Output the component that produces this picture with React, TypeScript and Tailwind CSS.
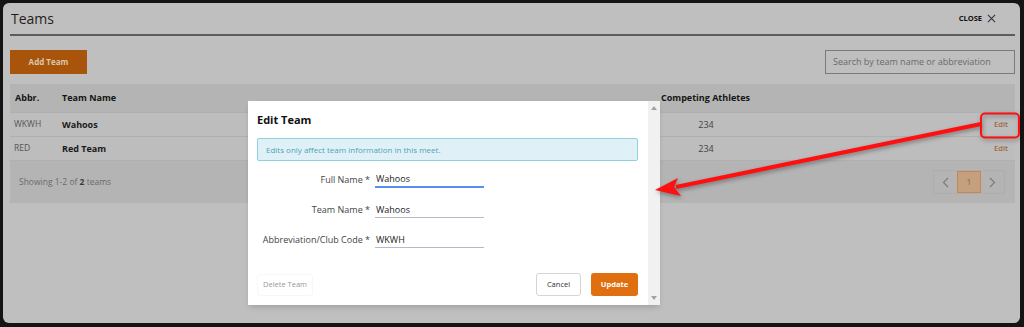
import React from "react";

const teams = [
  { abbr: "WKWH", name: "Wahoos", athletes: 234 },
  { abbr: "RED", name: "Red Team", athletes: 234 },
];

function Field({ label, value, active }: { label: string; value: string; active?: boolean }) {
  return (
    <div className="grid grid-cols-[113px_109px] items-center gap-x-[5px] h-[30px]">
      <span className="text-right text-[9px] text-[#444]">{label}</span>
      <div
        className={`h-[16px] flex items-center pl-[1px] text-[9px] text-[#222] border-b ${
          active ? "border-[#5b8def] border-b-2" : "border-[#b8b8c8]"
        }`}
      >
        {value}
      </div>
    </div>
  );
}

function EditTeamModal() {
  return (
    <div className="absolute left-[248px] top-[101px] w-[412px] h-[204px] bg-white flex shadow-md">
      <div className="flex-1 flex flex-col pl-[9px] pr-[10px] pt-[10px] pb-[9px]">
        <h2 className="text-[11px] font-bold text-[#111] leading-[18px]">Edit Team</h2>
        <div className="mt-[9px] h-[23px] flex items-center px-[8px] rounded-[2px] border border-[#8fd0df] bg-[#dff1f6] text-[8px] text-[#4ea3ba]">
          Edits only affect team information in this meet.
        </div>
        <div className="mt-[4px] flex flex-col">
          <Field label="Full Name *" value="Wahoos" active />
          <Field label="Team Name *" value="Wahoos" />
          <Field label="Abbreviation/Club Code *" value="WKWH" />
        </div>
        <div className="mt-auto flex items-center justify-between">
          <button className="h-[22px] px-[5px] rounded-[3px] border border-[#f7f7f7] text-[7.5px] text-[#9a9a9a]">
            Delete Team
          </button>
          <div className="flex gap-[10px]">
            <button className="h-[23px] w-[45px] rounded-[3px] border border-[#d4d4d4] bg-white text-[7.5px] text-[#333]">
              Cancel
            </button>
            <button className="h-[23px] w-[47px] rounded-[3px] bg-[#e0700f] text-[7.5px] font-bold text-white">
              Update
            </button>
          </div>
        </div>
      </div>
      <div className="w-[12px] bg-[#f1f1f1] flex flex-col items-center justify-between py-[5px]">
        <span className="w-0 h-0 border-x-[3.5px] border-x-transparent border-b-[4px] border-b-[#a3a3a3]" />
        <span className="w-0 h-0 border-x-[3.5px] border-x-transparent border-t-[4px] border-t-[#a3a3a3]" />
      </div>
    </div>
  );
}

function Annotation() {
  return (
    <svg
      className="absolute left-0 top-0 pointer-events-none"
      width="1024"
      height="327"
      viewBox="0 0 1024 327"
      style={{ filter: "drop-shadow(1px 2px 2px rgba(0,0,0,0.35))" }}
    >
      <rect x="981" y="113.5" width="38" height="24" rx="4" fill="none" stroke="#ff1010" strokeWidth="2" />
      <line x1="981" y1="124" x2="676" y2="187" stroke="#ff1010" strokeWidth="4" />
      <polygon points="655,190 678,178 674,187 681,196" fill="#ff1010" />
    </svg>
  );
}

export default function App() {
  return (
    <div
      className="relative w-[1024px] h-[327px] bg-[#141414] pt-[3px] pl-[3px] pr-[4px] pb-[4px]"
      style={{ fontFamily: '"Open Sans", "Noto Sans", sans-serif' }}
    >
      <div className="h-full rounded-[6px] bg-[#bfbfbf] pl-[7px] pr-[5px] flex flex-col">
        {/* header */}
        <div className="h-[33px] flex items-center justify-between border-b-2 border-[#5c5c5c] pl-[1px] pr-[19px]">
          <h1 className="text-[14px] text-[#1e1e1e]">Teams</h1>
          <button className="flex items-center gap-[5px] text-[7.5px] font-bold text-[#111]">
            CLOSE
            <svg width="9" height="9" viewBox="0 0 10 10" stroke="#333" strokeWidth="1.2">
              <path d="M1 1 L9 9 M9 1 L1 9" />
            </svg>
          </button>
        </div>

        {/* toolbar */}
        <div className="mt-[14px] flex items-center justify-between">
          <button className="h-[24px] w-[77px] bg-[#a8540a] text-[8px] font-bold text-[#dcc6b0]">
            Add Team
          </button>
          <div className="h-[24px] w-[190px] border border-[#7a7a7a] flex items-center px-[7px] text-[9px] text-[#6a6a6a]">
            Search by team name or abbreviation
          </div>
        </div>

        {/* table */}
        <div className="mt-[10px] text-[9px]">
          <div className="grid grid-cols-[52px_599px_90px_1fr] h-[28px] items-center bg-[#b4b4b4] font-bold text-[#151515]">
            <span className="pl-[5px]">Abbr.</span>
            <span>Team Name</span>
            <span>Competing Athletes</span>
            <span />
          </div>
          {teams.map((t) => (
            <div
              key={t.abbr}
              className="grid grid-cols-[52px_599px_90px_1fr] h-[24px] items-center border-t border-[#b0b0b0] bg-[#bdbdbd]"
            >
              <span className="pl-[4px] text-[8.5px] text-[#555]">{t.abbr}</span>
              <span className="font-bold text-[#1a1a1a]">{t.name}</span>
              <span className="text-center text-[#444]">{t.athletes}</span>
              <span className="text-right pr-[7px] text-[7.5px] font-semibold text-[#9c6840]">Edit</span>
            </div>
          ))}
          <div className="h-[43px] flex items-center justify-between border-t border-[#b0b0b0] bg-[#b4b4b4] pl-[9px] pr-[10px]">
            <span className="text-[8.5px] text-[#6a6a6a]">
              Showing 1-2 of <b className="text-[#3a3a3a]">2</b> teams
            </span>
            <div className="flex h-[24px] border border-[#adadad]">
              <span className="w-[23px] flex items-center justify-center text-[#7c7c7c]">
                <svg width="7" height="11" viewBox="0 0 7 11" fill="none" stroke="#7c7c7c" strokeWidth="1.2">
                  <path d="M6 1 L1.5 5.5 L6 10" />
                </svg>
              </span>
              <span className="w-[24px] flex items-center justify-center bg-[#c4a080] border border-[#c8874c] text-[8px] font-semibold text-[#b0703a]">
                1
              </span>
              <span className="w-[23px] flex items-center justify-center">
                <svg width="7" height="11" viewBox="0 0 7 11" fill="none" stroke="#7c7c7c" strokeWidth="1.2">
                  <path d="M1 1 L5.5 5.5 L1 10" />
                </svg>
              </span>
            </div>
          </div>
        </div>
      </div>

      <EditTeamModal />
      <Annotation />
    </div>
  );
}
